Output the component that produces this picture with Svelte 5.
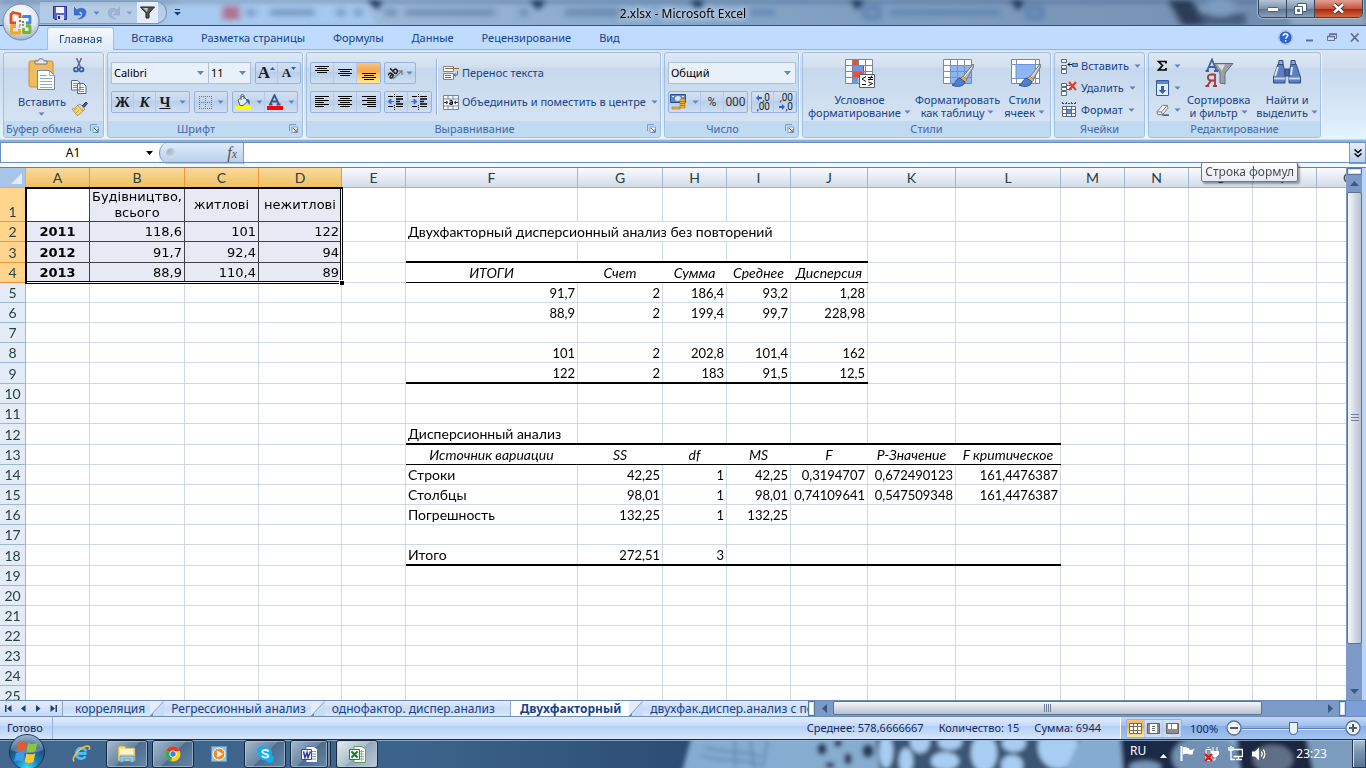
<script>
  const ribbonTabs = ['Главная', 'Вставка', 'Разметка страницы', 'Формулы', 'Данные', 'Рецензирование', 'Вид'];

  const columns = [
    ['A', 64], ['B', 95], ['C', 74], ['D', 83], ['E', 64], ['F', 172], ['G', 85], ['H', 64], ['I', 64],
    ['J', 77], ['K', 88], ['L', 105], ['M', 64], ['N', 64], ['O', 64], ['P', 64], ['Q', 64]
  ].map(([name, width]) => ({ name, width }));
  const tableWidth = 26 + columns.reduce((sum, c) => sum + c.width, 0);

  const cells = {
    B1: ['Будівництво, всього', 'mid wrap'], C1: ['житлові', 'mid'], D1: ['нежитлові', 'mid'],
    A2: ['2011', 'year'], B2: ['118,6', 'num'], C2: ['101', 'num'], D2: ['122', 'num'],
    A3: ['2012', 'year'], B3: ['91,7', 'num'], C3: ['92,4', 'num'], D3: ['94', 'num'],
    A4: ['2013', 'year'], B4: ['88,9', 'num'], C4: ['110,4', 'num'], D4: ['89', 'num'],
    F2: ['Двухфакторный дисперсионный анализ без повторений', '', 4],
    F4: ['ИТОГИ', 'head'], G4: ['Счет', 'head'], H4: ['Сумма', 'head'], I4: ['Среднее', 'head'], J4: ['Дисперсия', 'head end'],
    F5: ['91,7', 'num'], G5: ['2', 'num'], H5: ['186,4', 'num'], I5: ['93,2', 'num'], J5: ['1,28', 'num'],
    F6: ['88,9', 'num'], G6: ['2', 'num'], H6: ['199,4', 'num'], I6: ['99,7', 'num'], J6: ['228,98', 'num'],
    F8: ['101', 'num'], G8: ['2', 'num'], H8: ['202,8', 'num'], I8: ['101,4', 'num'], J8: ['162', 'num'],
    F9: ['122', 'num'], G9: ['2', 'num'], H9: ['183', 'num'], I9: ['91,5', 'num'], J9: ['12,5', 'num'],
    F12: ['Дисперсионный анализ', ''],
    F13: ['Источник вариации', 'head'], G13: ['SS', 'head'], H13: ['df', 'head'], I13: ['MS', 'head'],
    J13: ['F', 'head'], K13: ['P-Значение', 'head'], L13: ['F критическое', 'head end'],
    F14: ['Строки', ''], G14: ['42,25', 'num'], H14: ['1', 'num'], I14: ['42,25', 'num'],
    J14: ['0,3194707', 'num'], K14: ['0,672490123', 'num'], L14: ['161,4476387', 'num'],
    F15: ['Столбцы', ''], G15: ['98,01', 'num'], H15: ['1', 'num'], I15: ['98,01', 'num'],
    J15: ['0,74109641', 'num'], K15: ['0,547509348', 'num'], L15: ['161,4476387', 'num'],
    F16: ['Погрешность', ''], G16: ['132,25', 'num'], H16: ['1', 'num'], I16: ['132,25', 'num'],
    F18: ['Итого', ''], G18: ['272,51', 'num'], H18: ['3', 'num']
  };

  const rowHeights = { 1: 34, 3: 21, 9: 21, 12: 21, 18: 21 };
  const ruled = { 3: ['thick', 'J'], 4: ['thin', 'J'], 9: ['thick', 'J'], 12: ['thick', 'L'], 13: ['thin', 'L'], 18: ['thick', 'L'] };

  function buildRow(n) {
    const list = [];
    for (let i = 0; i < columns.length; i++) {
      const name = columns[i].name;
      const [text = '', kind = '', span = 1] = cells[name + n] ?? [];
      let cls = kind;
      if (n <= 4 && i < 4) cls += n === 1 && i === 0 ? ' source active' : ' source';
      const rule = ruled[n];
      if (rule && name >= 'F' && name <= rule[1]) cls += ' ' + rule[0];
      list.push({ text, cls, span });
      i += span - 1;
    }
    return { n, height: rowHeights[n] ?? 20, list };
  }
  const rows = Array.from({ length: 26 }, (_, i) => buildRow(i + 1));

  let zoom = $state(50);
  let cellName = $state('A1');
  let formula = $state('');
</script>

{#snippet caret()}
  <svg class="caret" width="7" height="4" viewBox="0 0 7 4"><path d="M0.5 0.5H6.5L3.5 3.8Z" fill="#5f86bd" /></svg>
{/snippet}

{#snippet launcher()}
  <button class="launcher" aria-label="Параметры">
    <svg width="9" height="9" viewBox="0 0 9 9" fill="none"><path d="M.5 7V.5H7" stroke="#7a9cc8" /><path d="M3 3h5.500v5.500H3z" fill="#fff" stroke="#7a9cc8" /><path d="M4 4l4 4M8 5v3H5" stroke="#55779f" /></svg>
  </button>
{/snippet}

{#snippet lines(spec, y0 = 0)}
  <svg width="16" height="16" viewBox="0 0 16 16">
    {#each spec as [x, w], i}
      <rect {x} y={y0 + i * 2} width={w} height="1" fill="#000" />
    {/each}
  </svg>
{/snippet}

{#snippet indent(right)}
  <svg width="18" height="16" viewBox="0 0 18 16">
    <path d="M7.500 0v3M7.500 11v5" stroke="#000" stroke-dasharray="1 1" />
    <path d="M9 2.500h7M9 12.500h7M1 2.500h5M1 12.500h5" stroke="#000" />
    <path d="M9 5h7M9 7.500h4M9 10h7" stroke="#000" stroke-width="1.500" />
    {#if right}
      <path d="M0 7.500h3M3 5l3 2.500L3 10z" fill="#3a6fd8" stroke="#3a6fd8" />
    {:else}
      <path d="M4 7.500h3M4 5L1 7.500 4 10z" fill="#3a6fd8" stroke="#3a6fd8" />
    {/if}
  </svg>
{/snippet}

{#snippet brush()}
  <path d="M31 6L21 19l3 3L32 8z" fill="#b9bcc2" stroke="#70757e" />
  <path d="M30 9L22 19" stroke="#f4f4f4" />
  <path d="M21 18l4 4-3 3-4-4z" fill="#e6b062" stroke="#8b6331" stroke-width=".6" />
  <path d="M18 20c-5 1-4 6-8 7 6 3 12 1 13-3z" fill="#4c7fd0" stroke="#2d5499" />
{/snippet}

<main class="window">
  <header class="titlebar">
    <svg class="backdrop" preserveAspectRatio="none" viewBox="0 0 1366 26" aria-hidden="true">
      <defs>
        <linearGradient id="glass" x1="0" y1="0" x2="1366" y2="0" gradientUnits="userSpaceOnUse">
          <stop offset="0" stop-color="#9db9d6" /><stop offset=".15" stop-color="#a9c5e3" /><stop offset=".5" stop-color="#85a5c8" />
          <stop offset=".85" stop-color="#7794b6" /><stop offset="1" stop-color="#6d88a6" />
        </linearGradient>
        <filter id="soft" x="-20%" y="-50%" width="140%" height="200%"><feGaussianBlur stdDeviation="3" /></filter>
      </defs>
      <rect width="1366" height="26" fill="url(#glass)" />
      <g filter="url(#soft)">
        <path d="M0 0H1366V3H0z" fill="#3a5d88" opacity=".6" />
        <path d="M180 3h185l12 23H150z" fill="#a8cbf2" opacity=".8" />
        <rect x="222" y="6" width="18" height="15" fill="#b0607c" opacity=".8" />
        <path d="M246 13h10M270 13h45M336 13h10M354 13h9M384 13h13M405 13h90M520 13h8M565 13h60" stroke="#4c6a91" stroke-width="8" opacity=".45" />
        <path d="M366 0h16l-4 11zM530 0h16l-8 11zM690 0h14l-6 11zM850 0h14l-6 11zM1010 0h14l-5 12z" fill="#123052" />
        <path d="M750 13h25M890 13h110M865 8h14v10h-14zM1028 8h14v10h-14z" stroke="#4773a6" stroke-width="5" fill="none" opacity=".6" />
        <path d="M1168 0h24l14 26h-24z" fill="#17283f" opacity=".8" />
        <path d="M1196 14h50v12h-46z" fill="#34496a" opacity=".7" />
        <ellipse cx="1220" cy="8" rx="16" ry="9" fill="#7b9cc0" />
        <path d="M1290 18h76v8h-76z" fill="#93abc4" />
      </g>
    </svg>
    <div class="quick">
      <button aria-label="Сохранить"><svg width="14" height="14" viewBox="0 0 14 14"><path d="M.5.5h13v13H2L.5 12z" fill="#5a63c9" stroke="#2b2f86" /><path d="M3 1h8v6H3z" fill="#f3f6ff" /><path d="M4 9h7v5H4z" fill="#d5dcee" /><path d="M5 10h2v3H5z" fill="#23276e" /></svg></button>
      <button class="pair" aria-label="Отменить"><svg width="13" height="14" viewBox="0 0 13 14"><path d="M0 1v8h7L4.500 6.500c2-2 4-1 4 1.500S7 12 4 13c5 0 8-3 8-7S6 1 2.800 4z" fill="#3b6fd4" stroke="#2857b0" stroke-width=".5" /></svg>{@render caret()}</button>
      <button class="pair dim" aria-label="Вернуть"><svg width="13" height="14" viewBox="0 0 13 14"><path d="M13 1v8H6l2.500-2.500c-2-2-4-1-4 1.500S6 12 9 13C4 13 1 10 1 6s6-5 9.200-2z" fill="#8fa6c6" stroke="#7189ad" stroke-width=".5" /></svg>{@render caret()}</button>
      <button class="filter" aria-label="Фильтр"><svg width="15" height="13" viewBox="0 0 15 13"><path d="M.5 1h14L9 7v5H6V7z" fill="#555" stroke="#222" /><path d="M3 2h5L7 6z" fill="#c9c9c9" /></svg></button>
    </div>
    <button class="customize" aria-label="Настройка панели"><svg width="7" height="7" viewBox="0 0 7 7"><path d="M1 .5h5" stroke="#1d3f77" /><path d="M0 3h7L3.500 6.500z" fill="#1d3f77" /></svg></button>
    <h1>2.xlsx - Microsoft Excel</h1>
    <div class="winbtns">
      <button aria-label="Свернуть"><svg width="12" height="6" viewBox="0 0 12 6"><rect x=".5" y="1.500" width="11" height="4" rx="1" fill="#fff" stroke="#4c5f78" /></svg></button>
      <button aria-label="Восстановить"><svg width="13" height="12" viewBox="0 0 13 12"><path d="M3.500.5h9v8h-9z" fill="#fff" stroke="#4c5f78" /><path d="M.5 3.500h8v8h-8z" fill="#fff" stroke="#4c5f78" /><path d="M3.500 6.500h2v2h-2z" fill="#7d91aa" stroke="#4c5f78" /></svg></button>
      <button class="close" aria-label="Закрыть"><svg width="13" height="11" viewBox="0 0 13 11"><path d="M2 1.500l9 8M11 1.500l-9 8" stroke="#4a3a44" stroke-width="4.500" /><path d="M2 1.500l9 8M11 1.500l-9 8" stroke="#fff" stroke-width="2.500" /></svg></button>
    </div>
  </header>

  <button class="office" aria-label="Кнопка Office">
    <svg width="38" height="38" viewBox="0 0 38 38">
      <defs><radialGradient id="orb" cx=".5" cy=".3" r=".75"><stop offset="0" stop-color="#fff" /><stop offset=".6" stop-color="#dfe6f0" /><stop offset="1" stop-color="#93a7c3" /></radialGradient></defs>
      <circle cx="19" cy="19" r="18" fill="url(#orb)" stroke="#7188a9" />
      <g fill="none" stroke-width="2.800" stroke-linejoin="round">
        <path d="M18 15v-4l-7-1.500-2 2V20h5" stroke="#dd4f16" />
        <path d="M21.500 15v-1.500H28V20h-4" stroke="#3c8ad8" />
        <path d="M14 23.500H9.500v6.500h8v-4M17 23.500h1" stroke="#f4a81d" />
        <path d="M21.500 25v4.500H28V23h-4" stroke="#74b52c" />
      </g>
      <path d="M17 17h2v2h-2z" fill="#dd4f16" /><path d="M20 18h2v2h-2z" fill="#3c8ad8" /><path d="M17 21h2v2h-2z" fill="#f4a81d" /><path d="M20 21h2v2h-2z" fill="#74b52c" />
    </svg>
  </button>

  <nav class="tabs">
    {#each ribbonTabs as tab, i}
      <button class:current={i === 0}>{tab}</button>
    {/each}
    <div class="doc">
      <button aria-label="Справка"><svg width="15" height="15" viewBox="0 0 15 15"><circle cx="7.500" cy="7.500" r="6.800" fill="#2c63cf" stroke="#fff" stroke-width="1.200" /><circle cx="7.500" cy="7.500" r="7" fill="none" stroke="#6b8fc4" stroke-width=".7" /><path d="M5.300 6c0-3 4.500-3 4.500-.4 0 1.500-2.200 1.400-2.200 3.200M7.600 10v1.600" fill="none" stroke="#fff" stroke-width="1.600" /></svg></button>
      <button aria-label="Свернуть книгу"><svg width="8" height="10" viewBox="0 0 8 10"><path d="M0 8.500h7" stroke="#667287" stroke-width="2" /></svg></button>
      <button aria-label="Восстановить книгу"><svg width="10" height="9" viewBox="0 0 10 9" fill="none"><path d="M2.500 3V1.500h7v4H7.500" stroke="#667287" /><path d="M.5 3.500h7v4h-7z" stroke="#667287" /><path d="M2 1h8M0 3.500h8" stroke="#667287" stroke-width="1.500" /></svg></button>
      <button aria-label="Закрыть книгу"><svg width="10" height="9" viewBox="0 0 10 9"><path d="M1 .5l7.500 8M8.500.5L1 8.500" stroke="#667287" stroke-width="1.800" /></svg></button>
    </div>
  </nav>

  <section class="ribbon" aria-label="Лента">
    <div class="group clipboard">
      <div class="body">
        <button class="big">
          <svg width="28" height="32" viewBox="0 0 28 32"><rect x="1" y="3" width="24" height="26" rx="2" fill="#f0bb5e" stroke="#c98f36" /><path d="M7 6V3h3c0-3 6-3 6 0h3v3z" fill="#e3e7ee" stroke="#6c7789" /><path d="M9.500 12.500h12l5 5v14h-17z" fill="#fff" stroke="#7187ab" /><path d="M21.500 12.500v5h5M12 17.500h7M12 20.500h12M12 23.500h12M12 26.500h12M12 29.500h12" fill="none" stroke="#93a9cb" /></svg>
          <span>Вставить</span>
          {@render caret()}
        </button>
        <div class="tools">
          <button aria-label="Вырезать"><svg width="12" height="15" viewBox="0 0 12 15" fill="none"><path d="M3.500 0l4 9M8.500 0l-4 9" stroke="#5a6c8d" stroke-width="1.500" /><circle cx="3" cy="11.500" r="2" stroke="#2f58a8" stroke-width="1.700" /><circle cx="8.500" cy="11.500" r="2" stroke="#2f58a8" stroke-width="1.700" /></svg></button>
          <button aria-label="Копировать"><svg width="16" height="14" viewBox="0 0 16 14"><path d="M.5.500h6l2.500 2.500v7h-8.500zM6.500 3.500h6l2.500 2.500v7.500h-8.500z" fill="#fff" stroke="#4469ab" /><path d="M2 3.500h4M2 5.500h4M2 7.500h4M8 7.500h5M8 9.500h5M8 11.500h5" stroke="#6a8cc8" /></svg></button>
          <button aria-label="Формат по образцу"><svg width="17" height="15" viewBox="0 0 17 15"><path d="M11 5l4-4 1.500 1.500-3.500 4z" fill="#4d5c9c" stroke="#323c74" /><path d="M9 3l5 5-2 2-6-5z" fill="#d8d8d8" stroke="#777" stroke-width=".7" /><path d="M6.500 4.500l5.500 5c-2 3-4 4.500-6 5L1 8c2-.5 4-1.500 5.500-3.500z" fill="#f1d47a" stroke="#a9832d" stroke-width=".7" /><path d="M3 9l3-1.500M5 12l3-3" stroke="#c9a040" /></svg></button>
        </div>
      </div>
      <footer><span>Буфер обмена</span>{@render launcher()}</footer>
    </div>

    <div class="group font">
      <div class="body rows">
        <div class="line">
          <span class="combos">
            <select class="face" aria-label="Шрифт"><option>Calibri</option></select>
            <select class="size" aria-label="Размер"><option>11</option></select>
          </span>
          <span class="strip">
            <button class="serif grow" aria-label="Увеличить размер">А<svg width="5" height="3" viewBox="0 0 5 3"><path d="M0 3h5L2.500 0z" fill="#2f5fa8" /></svg></button>
            <button class="serif shrink" aria-label="Уменьшить размер">А<svg width="5" height="3" viewBox="0 0 5 3"><path d="M0 0h5L2.500 3z" fill="#2f5fa8" /></svg></button>
          </span>
        </div>
        <div class="line">
          <span class="strip">
            <button class="serif">Ж</button>
            <button class="serif it">К</button>
            <button class="serif und"><u>Ч</u>{@render caret()}</button>
          </span>
          <span class="strip">
            <button class="pair wide" aria-label="Границы"><svg width="13" height="13" viewBox="0 0 13 13" fill="none" stroke="#6d7686" stroke-dasharray="1 1"><path d="M.5 0v13M6.500 0v13M12.500 0v13M0 .5h13M0 6.500h13M0 12.500h13" /></svg>{@render caret()}</button>
          </span>
          <span class="strip">
            <button class="pair" aria-label="Цвет заливки"><svg width="16" height="16" viewBox="0 0 16 16"><path d="M3 6l5-4 5 5-5 4.500H5z" fill="#e8eef8" stroke="#4c5c77" /><path d="M6 6V2c0-2 3-2 3 0v3" fill="none" stroke="#4c5c77" /><path d="M12 5c3 0 3 3 2.500 6C13 9 13 8 11 7z" fill="#2f62b5" /><path d="M0 12h16v4H0z" fill="#ff0" /></svg>{@render caret()}</button>
            <button class="pair" aria-label="Цвет текста"><svg width="16" height="16" viewBox="0 0 16 16"><path d="M3 10.500L7.500 1 12 10.500M4.500 7.500h6M2 10.500h3.500M9.500 10.500h4" fill="none" stroke="#35568f" stroke-width="1.800" /><path d="M0 12h16v4H0z" fill="#f00" /></svg>{@render caret()}</button>
          </span>
        </div>
      </div>
      <footer><span>Шрифт</span>{@render launcher()}</footer>
    </div>

    <div class="group align">
      <div class="body split">
        <div class="rows">
          <div class="line">
            <span class="strip">
              <button aria-label="По верхнему краю">{@render lines([[1, 14], [3, 10], [1, 14], [3, 10]], 1)}</button>
              <button aria-label="По середине">{@render lines([[1, 14], [3, 10], [1, 14], [3, 10]], 4)}</button>
              <button class="on" aria-label="По нижнему краю">{@render lines([[1, 14], [3, 10], [1, 14], [3, 10]], 8)}</button>
            </span>
            <span class="strip">
              <button class="pair" aria-label="Ориентация"><svg width="16" height="14" viewBox="0 0 16 14" fill="none"><g transform="rotate(-45 6 7)" stroke="#222" stroke-width="1.500"><path d="M0 4.500c4-1.500 4 0 4 4.500M4 6.500c-5-.5-5 2.500-2 2.500l2-1M6.500 1v8M6.500 5c5-1.500 5 4 0 4" /></g><path d="M5 13l9-8M10 5h4v4" stroke="#7b8494" stroke-width="1.300" /></svg>{@render caret()}</button>
            </span>
          </div>
          <div class="line">
            <span class="strip">
              <button aria-label="По левому краю">{@render lines([[1, 14], [1, 9], [1, 14], [1, 9], [1, 14], [1, 9]], 2)}</button>
              <button aria-label="По центру">{@render lines([[1, 14], [3, 10], [1, 14], [3, 10], [1, 14], [3, 10]], 2)}</button>
              <button aria-label="По правому краю">{@render lines([[1, 14], [6, 9], [1, 14], [6, 9], [1, 14], [6, 9]], 2)}</button>
            </span>
            <span class="strip">
              <button aria-label="Уменьшить отступ">{@render indent(false)}</button>
              <button aria-label="Увеличить отступ">{@render indent(true)}</button>
            </span>
          </div>
        </div>
        <div class="rows wraps">
          <button class="flat"><svg width="16" height="15" viewBox="0 0 16 15"><path d="M.5.500h10v5H.5zM.5 7.500h10v6H.5z" fill="#fff" stroke="#7a8799" /><path d="M2 2.500h14M2 9.500h6M2 11.500h6" stroke="#a0642c" /><path d="M14.500 5v4h-3M13 7.500l-2 1.500 2 1.500" fill="none" stroke="#4c74b4" /></svg>Перенос текста</button>
          <button class="flat"><svg width="16" height="15" viewBox="0 0 16 15"><path d="M.5.500h15v14H.5z" fill="#fff" stroke="#6c84a8" /><path d="M0 4h16M0 11h16M5 0v4M10 0v4M5 11v4M10 11v4" stroke="#6c84a8" /><path d="M1 7.500h3M15 7.500h-3M3 6l2 1.500L3 9M13 6l-2 1.500L13 9" fill="none" stroke="#333" /><path d="M6.500 6c3-1 3 0 3 3.500M9 7.500c-3 0-3 2 0 2" fill="none" stroke="#000" stroke-width="1.200" /></svg>Объединить и поместить в центре{@render caret()}</button>
        </div>
      </div>
      <footer><span>Выравнивание</span>{@render launcher()}</footer>
    </div>

    <div class="group number">
      <div class="body rows">
        <select class="format" aria-label="Числовой формат"><option>Общий</option></select>
        <div class="line">
          <span class="strip">
            <button class="pair wide" aria-label="Денежный формат"><svg width="17" height="16" viewBox="0 0 17 16"><path d="M.5.500h15v8H.5z" fill="#5f86c9" stroke="#2d4f8f" /><ellipse cx="8" cy="4.500" rx="3" ry="2.500" fill="#dfe8f6" /><path d="M2 2.500h2M12 2.500h2" stroke="#dfe8f6" /><path d="M10 5h5v9h-5zM2 13h8v2H2z" fill="#f2b63a" stroke="#a8741a" stroke-width=".6" /><path d="M10 7.500h5M10 9.500h5M10 11.500h5" stroke="#a8741a" /></svg>{@render caret()}</button>
            <button class="narrow">%</button>
            <button class="narrow">000</button>
          </span>
          <span class="strip">
            <button class="dec"><span><svg width="6" height="6" viewBox="0 0 6 6"><path d="M0 3l3-3v2h3v2H3v2z" fill="#2a62cf" /></svg>,0</span><span>,00</span></button>
            <button class="dec"><span>,00</span><span><svg width="6" height="6" viewBox="0 0 6 6"><path d="M6 3L3 0v2H0v2h3v2z" fill="#2a62cf" /></svg>,0</span></button>
          </span>
        </div>
      </div>
      <footer><span>Число</span>{@render launcher()}</footer>
    </div>

    <div class="group styles">
      <div class="body">
        <button class="big">
          <svg width="32" height="30" viewBox="0 0 32 30"><path d="M2.500 1.500h27v24h-27z" fill="#fff" stroke="#7a8799" /><path d="M9.500 1.500h6v24h-6z" fill="#6d97e6" /><path d="M9.500 1.500h6v6h-6zM9.500 13.500h12v6h-12z" fill="#ee5236" /><path d="M9.500 7.500h11v6h-11z" fill="#6d97e6" stroke="#3a62b0" /><path d="M2 7.500h28M2 13.500h28M2 19.500h28M9.500 1v25M15.500 1v6M22.500 1v25" stroke="#7a8799" fill="none" /><path d="M16.500 16.500h15v13h-15z" fill="#fff" stroke="#555e6e" /><path d="M23 18.500l-4 2.500 4 2.500M19 26.500h4M25 19.500h5M25 21.500h5M29 17.500l-3 5M25.500 24l4 1.500-4 2" fill="none" stroke="#111" /></svg>
          <span>Условное<br />форматирование{@render caret()}</span>
        </button>
        <button class="big">
          <svg width="32" height="30" viewBox="0 0 32 30"><path d="M1.500 1.500h28v24h-28z" fill="#fff" stroke="#7a8799" /><path d="M8 7h21v18H8z" fill="#8fb4f2" /><path d="M1 7.500h28M1 13.500h28M1 19.500h28M8.500 1v25M15.500 1v25M22.500 1v25" stroke="#7a93bd" fill="none" />{@render brush()}</svg>
          <span>Форматировать<br />как таблицу{@render caret()}</span>
        </button>
        <button class="big">
          <svg width="32" height="30" viewBox="0 0 32 30"><path d="M2.500 1.500h28v24h-28z" fill="#fff" stroke="#7a8799" /><path d="M2 6.500h28M2 20.500h28M7.500 1v25M26.500 1v25" stroke="#7a93bd" fill="none" /><path d="M7 6.500h19.500v14H7z" fill="#8fb4f2" stroke="#6a92d8" />{@render brush()}</svg>
          <span>Стили<br />ячеек{@render caret()}</span>
        </button>
      </div>
      <footer><span>Стили</span></footer>
    </div>

    <div class="group cellsgroup">
      <div class="body stack">
        <button class="flat"><svg width="17" height="15" viewBox="0 0 17 15"><path d="M.5.500h5v3h-5zM.5 6.500h5v3h-5zM.5 10.500h5v4h-5z" fill="#fff" stroke="#5a6b85" /><path d="M7 5.500h5M9 3.500l-2 2 2 2" fill="none" stroke="#111" /><path d="M11.500 4.500h5v3h-5z" fill="#7fa6ea" stroke="#3a5f9e" /></svg>Вставить{@render caret()}</button>
        <button class="flat"><svg width="17" height="15" viewBox="0 0 17 15"><path d="M.5 2.500h5v3h-5zM.5 6.500h5v3h-5zM.5 10.500h5v4h-5zM5.500 4.500h5v4h-5z" fill="#fff" stroke="#5a6b85" /><path d="M8 1l7 8M15 1L8 9" stroke="#ea3d22" stroke-width="2.200" /></svg>Удалить{@render caret()}</button>
        <button class="flat"><svg width="17" height="16" viewBox="0 0 17 16"><path d="M1 1.500h14M1.500 0v3M5.500 0v3M10.500 0v3M14.500 0v3" stroke="#3b4658" stroke-dasharray="2 1" /><path d="M1.500 4.500h13v10h-13z" fill="#fff" stroke="#5a6b85" /><path d="M1 7.500h14M1 11.500h14M5.500 4v11M10.500 4v11" stroke="#5a6b85" /><path d="M6 8h4v3H6z" fill="#5e8df0" /></svg>Формат{@render caret()}</button>
      </div>
      <footer><span>Ячейки</span></footer>
    </div>

    <div class="group editing">
      <div class="body">
        <div class="stack mini">
          <button class="flat" aria-label="Сумма"><svg width="13" height="12" viewBox="0 0 13 12"><path d="M10 3.500V1.500H2.500l4 4-4 4.500H10V8" fill="none" stroke="#000" stroke-width="1.700" /></svg>{@render caret()}</button>
          <button class="flat" aria-label="Заполнить"><svg width="13" height="16" viewBox="0 0 13 16"><path d="M.5.500h12v15H.5z" fill="#e6eefb" stroke="#34599e" /><path d="M1 1h11v3H1z" fill="#5a86d6" /><path d="M5 6h3v4h2.500L6.500 14 2.500 10H5z" fill="#2e62c6" /></svg>{@render caret()}</button>
          <button class="flat" aria-label="Очистить"><svg width="13" height="12" viewBox="0 0 14 12"><path d="M1 8l6-7h5l1 3-6 7H2z" fill="#f5f6fa" stroke="#6d7688" /><path d="M1 8h5l6-7M6 8l1 3" fill="none" stroke="#6d7688" /><path d="M7 11.500h7" stroke="#000" /></svg>{@render caret()}</button>
        </div>
        <button class="big">
          <svg width="32" height="30" viewBox="0 0 32 30"><path d="M4 13L9 1.500 13.500 13M6 9h6M2.500 13H6M11 13h4" fill="none" stroke="#3b62ab" stroke-width="1.800" /><path d="M12 16v12M12 16.500H7.500c-4 1-3 6 .5 6H12M8 22.500L4.500 27.500M2.500 28H6M10 28h4" fill="none" stroke="#a33a36" stroke-width="1.800" /><path d="M11 5.500h19L22 15v11l-5-1V15z" fill="#9aa0a8" stroke="#666c75" /><path d="M14 6.500h8l-3 6z" fill="#dcdfe3" /></svg>
          <span>Сортировка<br />и фильтр{@render caret()}</span>
        </button>
        <button class="big">
          <svg width="32" height="30" viewBox="0 0 32 30"><path d="M7 6h5l2 8v11H2.500v-6zM20 6h5l4.500 13v6H18V14z" fill="#5d80bd" stroke="#2f4c82" /><path d="M8 2.500h4v4H7.500zM20 2.500h4l.5 4H20z" fill="#8caadb" stroke="#2f4c82" /><path d="M14 11h4v7h-4z" fill="#48699f" stroke="#2f4c82" /><path d="M4 18l3-9M20 17l1-8" stroke="#d5e2f6" stroke-width="2" /><path d="M3 20.500h11M18 20.500h11" stroke="#c3d4ef" stroke-width="2" /></svg>
          <span>Найти и<br />выделить{@render caret()}</span>
        </button>
      </div>
      <footer><span>Редактирование</span></footer>
    </div>
  </section>

  <section class="formula">
    <div class="namebox">
      <input bind:value={cellName} aria-label="Имя ячейки" />
      <svg width="7" height="4" viewBox="0 0 7 4"><path d="M0 0h7L3.500 4z" fill="#000" /></svg>
    </div>
    <div class="fx">
      <i></i>
      <button aria-label="Вставить функцию"><em>f<small>x</small></em></button>
    </div>
    <input class="entry" bind:value={formula} aria-label="Строка формул" />
    <button class="expand" aria-label="Развернуть"><svg width="8" height="9" viewBox="0 0 8 9" fill="none" stroke="#000" stroke-width="1.500"><path d="M.5.500L4 3.500 7.500.5M.5 4.500L4 7.500l3.500-3" /></svg></button>
    <div class="tip" role="tooltip">Строка формул</div>
  </section>

  <section class="sheet">
    <div class="grid">
      <table style="width: {tableWidth}px">
        <colgroup>
          <col style="width: 26px" />
          {#each columns as c}<col style="width: {c.width}px" />{/each}
        </colgroup>
        <thead>
          <tr>
            <th class="corner" aria-label="Выделить всё"><svg width="11" height="11" viewBox="0 0 11 11"><path d="M11 0v11H0z" fill="#e4ecf7" /></svg></th>
            {#each columns as c, i}<th class:sel={i < 4}>{c.name}</th>{/each}
          </tr>
        </thead>
        <tbody>
          {#each rows as row}
            <tr style="height: {row.height}px">
              <th class:sel={row.n <= 4}>{row.n}</th>
              {#each row.list as cell}<td class={cell.cls} colspan={cell.span}>{cell.text}</td>{/each}
            </tr>
          {/each}
        </tbody>
      </table>
      <div class="selection"><i></i></div>
    </div>
    <div class="vscroll">
      <span class="knob"></span>
      <button aria-label="Вверх"><svg width="9" height="5" viewBox="0 0 9 5"><path d="M0 5h9L4.500 0z" fill="#3c5784" /></svg></button>
      <div class="track"><span class="thumb"><svg width="8" height="8" viewBox="0 0 8 8"><path d="M0 .5h8M0 3.500h8M0 6.500h8" stroke="#71809a" /></svg></span></div>
      <button aria-label="Вниз"><svg width="9" height="5" viewBox="0 0 9 5"><path d="M0 0h9L4.500 5z" fill="#3c5784" /></svg></button>
    </div>
  </section>

  <section class="bottom">
    <div class="sheets">
      <div class="steps">
        <button aria-label="Первый лист"><svg width="7" height="7" viewBox="0 0 7 7"><path d="M0 0h1.500v7H0zM6.500 0v7L2 3.500z" fill="#1a3f7c" /></svg></button>
        <button aria-label="Предыдущий лист"><svg width="7" height="7" viewBox="0 0 7 7"><path d="M5.500 0v7L1 3.500z" fill="#1a3f7c" /></svg></button>
        <button aria-label="Следующий лист"><svg width="7" height="7" viewBox="0 0 7 7"><path d="M1 0v7l4.500-3.500z" fill="#1a3f7c" /></svg></button>
        <button aria-label="Последний лист"><svg width="7" height="7" viewBox="0 0 7 7"><path d="M.5 0v7L5 3.500zM5.500 0H7v7H5.500z" fill="#1a3f7c" /></svg></button>
      </div>
      <button class="leaf">корреляция</button>
      {@render slant()}
      <button class="leaf">Регрессионный анализ</button>
      {@render slant()}
      <button class="leaf last">однофактор. диспер.анализ</button>
      <button class="leaf front">Двухфакторный</button>
      {@render slant()}
      <button class="leaf">двухфак.диспер.анализ с повт.</button>
    </div>
    <div class="hscroll">
      <span class="knob"></span>
      <button aria-label="Влево"><svg width="5" height="9" viewBox="0 0 5 9"><path d="M5 0v9L0 4.500z" fill="#3c5784" /></svg></button>
      <div class="track"><span class="thumb"><svg width="8" height="8" viewBox="0 0 8 8"><path d="M.5 0v8M2.500 0v8M4.500 0v8M6.500 0v8" stroke="#71809a" /></svg></span></div>
      <button aria-label="Вправо"><svg width="5" height="9" viewBox="0 0 5 9"><path d="M0 0v9l5-4.500z" fill="#3c5784" /></svg></button>
      <span class="knob"></span>
    </div>
  </section>

  <section class="status">
    <span class="ready">Готово</span>
    <div class="sums"><span>Среднее: 578,6666667</span><span>Количество: 15</span><span>Сумма: 6944</span></div>
    <div class="view">
      <div class="strip views">
        <button class="on" aria-label="Обычный"><svg width="13" height="11" viewBox="0 0 13 11"><path d="M.5.500h12v10H.5z" fill="#fff" stroke="#7b6a4c" /><path d="M0 3.500h13M0 7.500h13M4.500 0v11M8.500 0v11" stroke="#7b6a4c" /></svg></button>
        <button aria-label="Разметка страницы"><svg width="13" height="11" viewBox="0 0 13 11"><path d="M.5.500h12v10H.5z" fill="#8c8c8c" stroke="#666" /><path d="M3 1h7v9H3z" fill="#fff" /><path d="M5 3.500h3M5 5.500h3M5 7.500h3" stroke="#666" /></svg></button>
        <button aria-label="Страничный"><svg width="13" height="11" viewBox="0 0 13 11"><path d="M.5.500h12v10H.5z" fill="#8c8c8c" stroke="#666" /><path d="M2 1h3v5H2zM6 1h5v5H6z" fill="#fff" /></svg></button>
      </div>
      <span class="pct">100%</span>
      <button class="round" aria-label="Уменьшить"><svg width="16" height="16" viewBox="0 0 16 16"><circle cx="8" cy="8" r="7" fill="#eef3fa" stroke="#5e7392" stroke-width="1.300" /><path d="M4 8h8" stroke="#4a5c78" stroke-width="2" /></svg></button>
      <input type="range" min="0" max="100" bind:value={zoom} aria-label="Масштаб" />
      <button class="round" aria-label="Увеличить"><svg width="16" height="16" viewBox="0 0 16 16"><circle cx="8" cy="8" r="7" fill="#eef3fa" stroke="#5e7392" stroke-width="1.300" /><path d="M4 8h8M8 4v8" stroke="#4a5c78" stroke-width="2" /></svg></button>
    </div>
  </section>

  <footer class="taskbar">
    <svg class="backdrop" preserveAspectRatio="none" viewBox="0 0 1366 29" aria-hidden="true">
      <defs>
        <linearGradient id="desk" x1="0" y1="0" x2="1366" y2="0" gradientUnits="userSpaceOnUse">
          <stop offset="0" stop-color="#41678f" /><stop offset=".3" stop-color="#3d638c" /><stop offset=".5" stop-color="#2c4d73" />
        </linearGradient>
        <filter id="haze" x="-5%" y="-50%" width="110%" height="200%"><feGaussianBlur stdDeviation="2" /></filter>
      </defs>
      <rect width="1366" height="29" fill="url(#desk)" />
      <g filter="url(#haze)">
        <path d="M692 -4L682 33H1366V-4z" fill="#86acd0" />
        <path d="M705 8c20 8 40 2 55 10M700 16c20 8 40 2 60 10M735 0v29M750 0l4 29M768 0l-6 29" stroke="#5f86ad" stroke-width="2" fill="none" />
        <g fill="#283d5c"><ellipse cx="822" cy="10" rx="5" ry="6" /><ellipse cx="838" cy="4" rx="4" ry="4" /><ellipse cx="848" cy="20" rx="4" ry="6" /><ellipse cx="868" cy="12" rx="6" ry="7" /><ellipse cx="830" cy="26" rx="5" ry="3" /><ellipse cx="886" cy="24" rx="5" ry="5" /></g>
        <path d="M875 -4h205l60 37H880z" fill="#3a5475" />
        <g fill="#a9cdf2"><ellipse cx="886" cy="12" rx="7" ry="17" /><ellipse cx="906" cy="22" rx="7" ry="13" /><ellipse cx="920" cy="3" rx="10" ry="11" /><ellipse cx="945" cy="22" rx="14" ry="9" /><ellipse cx="950" cy="3" rx="12" ry="8" /><ellipse cx="984" cy="14" rx="13" ry="19" /><ellipse cx="1012" cy="26" rx="11" ry="10" /><ellipse cx="1014" cy="4" rx="12" ry="9" /><ellipse cx="1058" cy="8" rx="20" ry="22" /></g>
        <path d="M1082 -4h40l8 37h-66z" fill="#86abd0" />
        <path d="M1120 -4h75l20 37h-92z" fill="#1d2c48" />
        <ellipse cx="1145" cy="28" rx="16" ry="6" fill="#7796b9" />
        <ellipse cx="1206" cy="18" rx="34" ry="22" fill="#7290b2" />
        <path d="M1236 -4h70l8 37h-74z" fill="#1b2740" />
        <ellipse cx="1273" cy="20" rx="20" ry="14" fill="#5e6f86" />
        <path d="M1306 -4h60v37h-50z" fill="#7c9cbd" />
      </g>
      <path d="M0 .5h1366" stroke="#1f2f3f" /><path d="M0 1.500h1366" stroke="#9fc1dd" opacity=".7" />
    </svg>
    <button class="start" aria-label="Пуск">
      <svg width="38" height="38" viewBox="0 0 38 38">
        <defs><radialGradient id="startorb" cx=".5" cy=".95" r=".95"><stop offset="0" stop-color="#3fe0ff" /><stop offset=".35" stop-color="#1a7fb8" /><stop offset=".7" stop-color="#1f4f80" /><stop offset="1" stop-color="#7fa3c2" /></radialGradient></defs>
        <circle cx="19" cy="19" r="17.500" fill="url(#startorb)" stroke="#173a58" />
        <path d="M3 17a16 15 0 0 1 32 0c-8 4-24 4-32 0z" fill="#fff" opacity=".25" />
        <path d="M10 9.500c3-2 6-1.500 8.500 0L17 18c-3-1.500-5.500-1.500-8.500 0z" fill="#e9592b" />
        <path d="M20 10c3 1.500 6 1.500 9.500-.5L27.500 18c-3 1.500-6 1.500-9 .3z" fill="#8cc63c" />
        <path d="M8 20c3-1.500 6-1.500 8.700 0L15 28.500c-3-1.500-5.500-1.500-8.500 0z" fill="#3f9be8" />
        <path d="M18.300 20.500c3 1.200 6 1.200 9-.3L25.500 29c-3 1.500-6 1.500-8.800 0z" fill="#fcc72c" />
      </svg>
    </button>
    <div class="apps">
      <button aria-label="Internet Explorer"><svg width="19" height="18" viewBox="0 0 19 18"><path d="M14 6.500c-1-4-8-5-9.500.5-1.500 6.500 6 8.500 9 4.500M5 8.500h9.500" fill="none" stroke="#52bdf5" stroke-width="2.800" /><path d="M2 16.500C-1 12 9 1.500 16 1c2 .3 1.800 2 1 3.800" fill="none" stroke="#f2c23a" stroke-width="1.600" /></svg></button>
      <button class="task" aria-label="Проводник"><svg width="20" height="18" viewBox="0 0 20 18"><path d="M1 3l1-2h6l1 2h9v13H1z" fill="#f3dc8c" stroke="#b9953f" stroke-width=".7" /><path d="M3 4h13v5H3z" fill="#fff6cf" /><path d="M3 17v-6h14v6h-4v-3H7v3z" fill="#8cc9f0" stroke="#4e8fc4" stroke-width=".7" /></svg></button>
      <button class="task" aria-label="Chrome"><svg width="16" height="16" viewBox="0 0 16 16"><circle cx="8" cy="8" r="7.500" fill="#fcd116" /><path d="M8 8L1.300 4.500A7.500 7.500 0 0 1 14.900 5H8z" fill="#e33b2e" /><path d="M8 8l-2 7.300A7.500 7.500 0 0 1 1.300 4.500z" fill="#3bab49" /><circle cx="8" cy="8" r="3.500" fill="#fff" /><circle cx="8" cy="8" r="2.700" fill="#3f82de" /></svg></button>
      <button aria-label="Проигрыватель"><svg width="16" height="16" viewBox="0 0 16 16"><path d="M.5.500h15v15H.5z" fill="#8fc6ea" stroke="#5d9dcb" /><circle cx="8" cy="8" r="6" fill="#f4892a" stroke="#fff" /><path d="M6 4.500l6 3.500-6 3.500z" fill="#fff" /></svg></button>
      <button class="task" aria-label="Skype"><svg width="17" height="17" viewBox="0 0 17 17"><circle cx="8" cy="7.500" r="7" fill="#12aef0" /><circle cx="4.500" cy="4.500" r="4.300" fill="#12aef0" /><circle cx="12.500" cy="12.500" r="4.200" fill="#12aef0" /><path d="M11.500 5.500C10.500 3.500 5 3.500 5.300 6c.3 2.200 6 1.500 6 4 0 2.300-5.500 2-6.300-.2" fill="none" stroke="#fff" stroke-width="1.900" /></svg></button>
      <button class="task double" aria-label="Word"><svg width="17" height="17" viewBox="0 0 17 17"><path d="M5 .5h8l3.500 3v13H5z" fill="#fff" stroke="#5d6fa8" /><path d="M9 5.500h6M9 8h6M9 10.500h6M9 13h6" stroke="#8494c8" /><path d="M.5 3.500h10v10H.5z" fill="#eef1fb" stroke="#3b4fa0" /><path d="M2.500 5.500l1.500 6 2-5 1 5 2.500-6" fill="none" stroke="#2c3f94" stroke-width="1.500" /></svg></button>
      <button class="task live" aria-label="Excel"><svg width="17" height="17" viewBox="0 0 17 17"><path d="M5 .5h8l3.500 3v13H5z" fill="#fff" stroke="#5d9a62" /><path d="M9 5.500h6M9 8h6M9 10.500h6M9 13h6M12.500 4v11" stroke="#86b98a" /><path d="M.5 3.500h10v10H.5z" fill="#eefaee" stroke="#26813a" /><path d="M2.500 5.500l6 6M8.500 5.500l-6 6" stroke="#1b7430" stroke-width="2" /></svg></button>
    </div>
    <div class="tray">
      <span class="lang">RU</span>
      <button class="up" aria-label="Скрытые значки"><svg width="7" height="4" viewBox="0 0 7 4"><path d="M0 4h7L3.500 0z" fill="#fff" /></svg></button>
      <svg width="15" height="15" viewBox="0 0 15 15"><path d="M1.500 0v15" stroke="#fff" stroke-width="2" /><path d="M3 1.500c3-1.500 4 1 6 .5v1.500c2 .5 3 0 5.500-.5-1 2-2 3-1.500 5-2 1-3 .5-5 0-2-.5-3-.5-5 .5z" fill="#fff" /></svg>
      <svg width="15" height="16" viewBox="0 0 15 16"><path d="M2 3.500h5v11H2zM3.500 1.500h2" fill="#8d98a6" stroke="#fff" /><path d="M9 1v4M13 1v4M7.500 5.500h7v3l-2 2h-3l-2-2z" fill="#fff" stroke="#fff" /><path d="M11 10v4H8" fill="none" stroke="#fff" /><path d="M1 8l7 7M8 8l-7 7" stroke="#e01818" stroke-width="2.400" /></svg>
      <svg width="15" height="15" viewBox="0 0 15 15" fill="none" stroke="#fff" stroke-width="1.400"><path d="M5.500 3.500h9v7h-9M8 13.500h6M10.500 10.500v3M1 1v3h4V1M3 0v3M3 4v9.500h4" /></svg>
      <svg width="15" height="14" viewBox="0 0 15 14"><path d="M0 4.500h3L7 .5v13L3 9.500H0z" fill="#fff" /><path d="M9 4.500c1.500 1.500 1.500 3.500 0 5M11 2.500c2.500 2.500 2.500 6.500 0 9" fill="none" stroke="#fff" stroke-width="1.200" /></svg>
      <time>23:23</time>
      <button class="desktop" aria-label="Свернуть все окна"></button>
    </div>
  </footer>
</main>

{#snippet slant()}
  <svg class="slant" width="14" height="16" viewBox="0 0 14 16"><path d="M0 0H13L0 15z" fill="#e3edfb" /><path d="M0 15L13.500.5" stroke="#8ea6cb" /><path d="M0 15l3-3v3z" fill="#6d8cc0" /></svg>
{/snippet}

<style>
  :global(body) { margin: 0; }
  * { box-sizing: border-box; }
  button { margin: 0; padding: 0; border: 0; background: none; color: inherit; font: inherit; white-space: nowrap; }
  svg { display: block; flex: none; }
  input { font: inherit; }

  .window { position: relative; display: flex; flex-direction: column; height: 100vh; overflow: hidden; background: #bfdbff; color: #15428b; font: 11px/16px "Noto Sans", "Open Sans", sans-serif; }
  .backdrop { position: absolute; inset: 0; width: 100%; height: 100%; z-index: 0; }

  .titlebar { position: relative; display: flex; flex: none; height: 26px; padding-left: 40px; border-bottom: 1px solid #3c4f66; align-items: flex-start; }
  .quick { position: relative; display: flex; align-items: center; gap: 7px; height: 23px; margin-top: 1px; padding: 0 8px 0 13px; border: 1px solid #7f98b8; border-left: 0; border-radius: 0 12px 12px 0; background: #c5d8ee88; }
  .quick button { display: flex; align-items: center; gap: 6px; }
  .dim { opacity: .6; }
  .quick .filter { justify-content: center; width: 21px; height: 21px; margin-left: -3px; border: 1px solid #e6eef8; background: #e3ecf7; }
  .customize { position: relative; margin: 9px 0 0 7px; }
  h1 { position: absolute; inset: 5px 0 auto 0; margin: 0; text-align: center; color: #000; font: 12px/18px "Noto Sans", sans-serif; text-shadow: 0 0 6px #fff, 0 0 8px #dce9f8; }
  .winbtns { position: relative; display: flex; height: 18px; margin: 0 3px 0 auto; border: 1px solid #35465c; border-top: 0; border-radius: 0 0 5px 5px; overflow: hidden; box-shadow: 0 0 0 1px #b9cbe0aa; }
  .winbtns button { display: grid; place-items: center; width: 28px; background: linear-gradient(#b6c4d6, #7f93ad 50%, #5d738f 51%, #8ba1ba); border-right: 1px solid #35465c; }
  .winbtns .close { width: 47px; border: 0; background: linear-gradient(#e2a294, #c9553e 50%, #a8200a 51%, #d06a3c); }

  .office { position: absolute; left: 2px; top: 3px; z-index: 3; }

  .tabs { display: flex; flex: none; align-items: flex-end; height: 24px; padding-left: 47px; border-bottom: 1px solid #8db2e3; background: #bfdbff; }
  .tabs > button { height: 22px; margin-right: 6px; padding: 0 11px; }
  .tabs > .current { position: relative; height: 23px; margin-bottom: -1px; border: 1px solid #9fc0ee; border-bottom: 0; border-radius: 3px 3px 0 0; background: linear-gradient(#f5f9ff, #dfe9f6); }
  .doc { display: flex; align-items: center; gap: 13px; height: 24px; margin-left: auto; padding-right: 6px; }

  .ribbon { display: flex; flex: none; gap: 3px; height: 90px; padding: 2px 3px; border-bottom: 1px solid #a9eaf3; border-radius: 0 0 3px 3px; background: linear-gradient(#dbe6f4, #cfddef 20%, #c9d9ee 21%, #dcebf9 80%, #e5f6fe); }
  .group { display: flex; flex-direction: column; flex: none; height: 86px; border: 1px solid #a3bfdf; border-radius: 3px; background: linear-gradient(#dee8f5, #d1dfef 17%, #c7d8ed 18%, #d9e6f5); box-shadow: 1px 1px 0 #eef5fd; overflow: hidden; }
  .group footer { position: relative; display: flex; flex: none; align-items: center; justify-content: center; height: 16px; background: #c1d9f1; color: #4168a8; }
  .launcher { position: absolute; right: 4px; top: 3px; }
  .group .launcher + span, .font footer, .align footer, .number footer { padding-right: 18px; }
  .clipboard footer { justify-content: flex-start; padding-left: 2px; }
  .clipboard { width: 101px; } .font { width: 196px; } .align { width: 355px; } .number { width: 135px; }
  .styles { width: 249px; } .cellsgroup { width: 91px; } .editing { width: 173px; }
  .body { display: flex; flex: 1; min-height: 0; }
  .body.rows { padding-left: 3px; }
  .rows { display: flex; flex-direction: column; gap: 7px; padding-top: 9px; }
  .line { display: flex; gap: 4px; }
  .strip { display: flex; height: 22px; border: 1px solid #94b3dd; border-radius: 2px; background: linear-gradient(#d3e1f4, #c3d5ee 45%, #b9cee9 46%, #cfdff3); }
  .strip > button { display: flex; align-items: center; justify-content: center; min-width: 22px; border-right: 1px solid #b3cae8; }
  .strip > button:last-child { border-right: 0; }
  .strip .on { background: linear-gradient(#fbc27c, #f9a94b 40%, #fdc45e 60%, #ffe79a); }
  .pair { display: flex; align-items: center; gap: 5px; }
  .strip > .pair { min-width: 32px; }
  .caret { flex: none; }
  select { appearance: none; height: 22px; padding: 0 4px 0 2px; border: 1px solid #abc1de; border-radius: 0; color: #000; font: 11px/18px "Noto Sans", sans-serif; background: #e8f0fa url("data:image/svg+xml,%3Csvg xmlns='http://www.w3.org/2000/svg' width='7' height='4'%3E%3Cpath d='M0 0h7L3.500 4z' fill='%235f86bd'/%3E%3C/svg%3E") no-repeat right 4px center; }
  .combos { display: flex; }
  .face { width: 98px; } .size { width: 43px; margin-left: -1px; }
  .serif { font: bold 15px/20px "Liberation Serif", serif; color: #1b1b1b; }
  .serif.grow { font-size: 17px; } .serif.shrink { font-size: 13px; }
  .grow svg, .shrink svg { align-self: flex-start; margin-top: 4px; }
  .serif.it { font-style: italic; }
  .strip > .und { gap: 8px; min-width: 33px; }
  .split { gap: 4px; padding-left: 3px; }
  .align .strip > button { min-width: 23px; }
  .align .strip > .pair { min-width: 30px; gap: 2px; }
  .align .line { gap: 3px; }
  .wraps { padding-left: 6px; margin-top: 6px; padding-top: 3px; height: 56px; border-left: 1px solid #97b3d9; box-shadow: inset 1px 0 0 #f2f7fd; }
  .flat { display: flex; align-items: center; gap: 3px; height: 22px; }
  .flat .caret { margin-left: 2px; }
  .format { width: 128px; }
  .number .line { gap: 3px; }
  .strip > .narrow { min-width: 23px; color: #333; font: 12px/16px Roboto, sans-serif; }
  .strip > .dec { flex-direction: column; align-items: flex-end; padding-right: 3px; color: #222; font: 10px/9px Roboto, sans-serif; }
  .dec span { display: flex; align-items: center; }

  .big { display: flex; flex-direction: column; align-items: center; padding-top: 5px; line-height: 13px; }
  .big > svg + span { margin-top: 5px; }
  .big span { text-align: center; }
  .big span .caret { display: inline-block; margin: 0 0 3px 3px; }
  .clipboard .body { padding-left: 14px; gap: 5px; }
  .clipboard .big > .caret { margin-top: 4px; }
  .tools { display: flex; flex-direction: column; gap: 7px; padding-top: 5px; align-items: center; }
  .styles .body { justify-content: space-between; padding: 0 5px; }
  .stack { display: flex; flex-direction: column; padding: 2px 0 0 6px; }
  .editing .body { gap: 6px; }
  .mini { padding-left: 7px; width: 32px; }

  .formula { position: relative; display: flex; flex: none; align-items: stretch; height: 28px; padding: 2px 0 3px; border-bottom: 1px solid #5b80b1; background: linear-gradient(#8fb0db 0 2px, #f2f7fd 2px); }
  .formula::before { content: ""; position: absolute; inset: 2px 0 4px; border: 1px solid #6b8fbd; border-right: 0; pointer-events: none; }
  .namebox { display: flex; align-items: center; width: 159px; padding-right: 6px; background: #fff; }
  .namebox input { width: 100%; min-width: 0; padding: 0; border: 0; background: none; text-align: center; color: #000; font-size: 12px; }
  .fx { display: flex; align-items: center; justify-content: space-between; width: 85px; padding: 0 6px; border: solid #7a9cc8; border-width: 0 1px; border-radius: 12px 0 0 12px; background: linear-gradient(#e3edf9, #b7cdea); }
  .fx i { width: 10px; height: 10px; border-radius: 50%; background: radial-gradient(circle at 30% 30%, #9fb1cb, #e6eefa); }
  .fx em { color: #555; font: italic 16px/18px "Liberation Serif", serif; }
  .fx small { font-size: 12px; }
  .entry { flex: 1; min-width: 0; border: 0; background: #fff; outline: 0; }
  .expand { display: grid; place-items: center; width: 17px; border: 1px solid #7a9cc8; background: linear-gradient(#e6effa, #b9cfec); }
  .tip { position: absolute; z-index: 5; right: 68px; top: 22px; padding: 0 3px; border: 1px solid #767676; border-radius: 2px; background: linear-gradient(#fff, #e5e9f4); box-shadow: 2px 2px 2px #0005; color: #4c4c4c; font-size: 12px; line-height: 18px; }

  .sheet { display: flex; flex: 1; min-height: 0; background: #fff; }
  .grid { position: relative; flex: 1; min-width: 0; overflow: hidden; }
  table { table-layout: fixed; border-collapse: separate; border-spacing: 0; color: #000; font: 14px/18px Lato, "Open Sans", sans-serif; }
  th, td { padding: 0 2px; border: solid #d0d7e5; border-width: 0 1px 1px 0; overflow: hidden; white-space: nowrap; text-align: left; vertical-align: bottom; }
  thead tr { height: 20px; }
  th { padding: 0; text-align: center; font-weight: 400; color: #27413e; border-color: #9eb6ce; background: #e4ecf7; }
  thead th { background: linear-gradient(#f9fbfd, #d3dbe9); }
  thead th.sel { border-color: #f29536; background: linear-gradient(#f9d99f, #f1c15f); }
  tbody th.sel { border-color: #f29536; background: #ffd58d; }
  thead .corner { background: #a9c4e9; }
  .corner svg { margin: 4px 3px 3px auto; }
  td.num { text-align: right; font-size: 13px; }
  td.head { text-align: center; font-style: italic; }
  td.source { border-color: #3f4147; background: #e7eaf4; font: 13px/17px "DejaVu Sans", sans-serif; vertical-align: middle; }
  td.active { background: #fff; }
  td.mid { text-align: center; padding: 0; }
  td.wrap { white-space: normal; line-height: 16px; }
  td.year { text-align: center; font-weight: 700; }
  td.thick, td.thin { --side: #d0d7e5; --rule: 1px; padding: 0 3px 1px 2px; border: 0; background: linear-gradient(#000, #000) bottom / 100% var(--rule) no-repeat, linear-gradient(var(--side), var(--side)) right / 1px 100% no-repeat; }
  td.thick { --rule: 2px; padding-bottom: 2px; }
  td.head { --side: #fff; }
  td.end { --side: #d0d7e5; }
  .selection { position: absolute; left: 25px; top: 19px; width: 318px; height: 97px; border: 2px solid #000; border-width: 2px 1px 1px 2px; box-shadow: inset -1px -1px 0 #fff, inset -2px -2px 0 #000; pointer-events: none; }
  .selection i { position: absolute; right: -2px; bottom: -2px; width: 5px; height: 5px; background: #000; border: solid #fff; border-width: 1px 0 0 1px; }

  .vscroll { display: flex; flex-direction: column; flex: none; width: 20px; padding-left: 1px; border-right: 4px solid #bcd5f7; background: #7b9ac8; }
  .vscroll button { display: grid; place-items: center; height: 17px; }
  .knob { flex: none; border: 1px solid #56769f; background: #fff; box-shadow: inset 0 0 0 1px #cfe0f6; }
  .vscroll .knob { height: 7px; }
  .track { flex: 1; min-width: 0; min-height: 0; }
  .thumb { display: grid; place-items: center; border: 1px solid #5d7391; border-radius: 2px; }
  .vscroll .thumb { height: 92%; background: linear-gradient(90deg, #f6f8fb, #d5dbe5 50%, #b9c2d0); }

  .bottom { display: flex; flex: none; height: 17px; border-top: 1px solid #6d8db9; border-bottom: 1px solid #6d8db9; background: #c9dcf5; font-size: 12px; }
  .sheets { display: flex; flex: 0 0 808px; max-width: 60%; overflow: hidden; }
  .steps { display: flex; flex: none; align-items: center; gap: 8px; width: 63px; padding-left: 5px; border-right: 1px solid #8ea6cb; background: linear-gradient(#e3edfb, #c5d9f5); }
  .leaf { flex: none; height: 15px; padding: 0 5px 0 7px; overflow: hidden; background: linear-gradient(#e3edfb, #c8dbf6 50%, #dbe8fa); line-height: 15px; }
  .steps + .leaf { padding-left: 12px; }
  .last { padding-right: 15px; border-right: 1px solid #8ea6cb; }
  .front { padding: 0 8px 0 9px; background: #fff; font-weight: 700; }
  .hscroll { display: flex; flex: 1; min-width: 0; border-right: 20px solid #7b9fd6; background: #7b9ac8; }
  .hscroll .knob { width: 7px; }
  .hscroll button { display: grid; place-items: center; width: 18px; }
  .hscroll .thumb { width: 88%; height: 14px; background: linear-gradient(#f6f8fb, #d5dbe5 50%, #b9c2d0); }

  .status { display: flex; flex: none; align-items: stretch; height: 22px; background: linear-gradient(#e3edfb, #c4dafa 40%, #b4cff6 41%, #d7e6fa); line-height: 21px; color: #15285c; }
  .ready { width: 53px; padding-left: 7px; border-right: 1px solid #94b3dd; }
  .sums { display: flex; gap: 15px; margin-left: auto; padding-right: 19px; border-right: 1px solid #fff; }
  .view { display: flex; align-items: center; width: 245px; padding: 0 5px; background: linear-gradient(#c4d8f4, #9fc0ee 40%, #88aee6 41%, #a5c5f0); }
  .views { height: 19px; } .views > button { min-width: 18px; }
  .pct { padding: 0 8px; }
  .view input { appearance: none; flex: 1; min-width: 0; height: 15px; margin: 0; background: linear-gradient(transparent 7px, #5f7fae 7px 8px, #dbe8fa 8px 9px, transparent 9px); }
  .view input::-webkit-slider-thumb { appearance: none; width: 9px; height: 13px; background: #e8f0fb; border: 1px solid #4c678f; border-radius: 1px 1px 5px 5px; }

  .taskbar { position: relative; display: flex; flex: none; height: 29px; padding-left: 60px; }
  .start { position: absolute; z-index: 2; left: 8px; top: -6px; }
  .apps { position: relative; display: flex; gap: 4px; padding-top: 1px; }
  .apps button { display: grid; place-items: center; width: 42px; height: 28px; }
  .apps .task { border: 1px solid #16283c; border-radius: 3px; background: linear-gradient(135deg, #a6bccf, #6885a2 50%, #4c6c8d 51%, #6787a6); box-shadow: inset 0 0 0 1px #b9cddf99; }
  .apps .double { width: 38px; margin-right: 4px; box-shadow: inset 0 0 0 1px #b9cddf99, 3px 0 0 -1px #6c89a5, 4px 0 0 -1px #16283c; }
  .apps .live { background: linear-gradient(135deg, #e6edf2, #a9bccb 50%, #90a7b9 51%, #bccbd6); }
  .tray { position: relative; display: flex; align-items: center; gap: 9px; margin-left: auto; color: #fff; font-size: 12px; }
  .lang { align-self: flex-start; padding-top: 4px; }
  .up { margin: 4px 4px 0 5px; }
  time { padding: 0 16px 0 20px; }
  .desktop { align-self: stretch; width: 14px; border: 1px solid #26384c; background: linear-gradient(#a9bfd3, #7590ab 50%, #587694); box-shadow: inset 1px 1px 0 #d0dfec; }
</style>
